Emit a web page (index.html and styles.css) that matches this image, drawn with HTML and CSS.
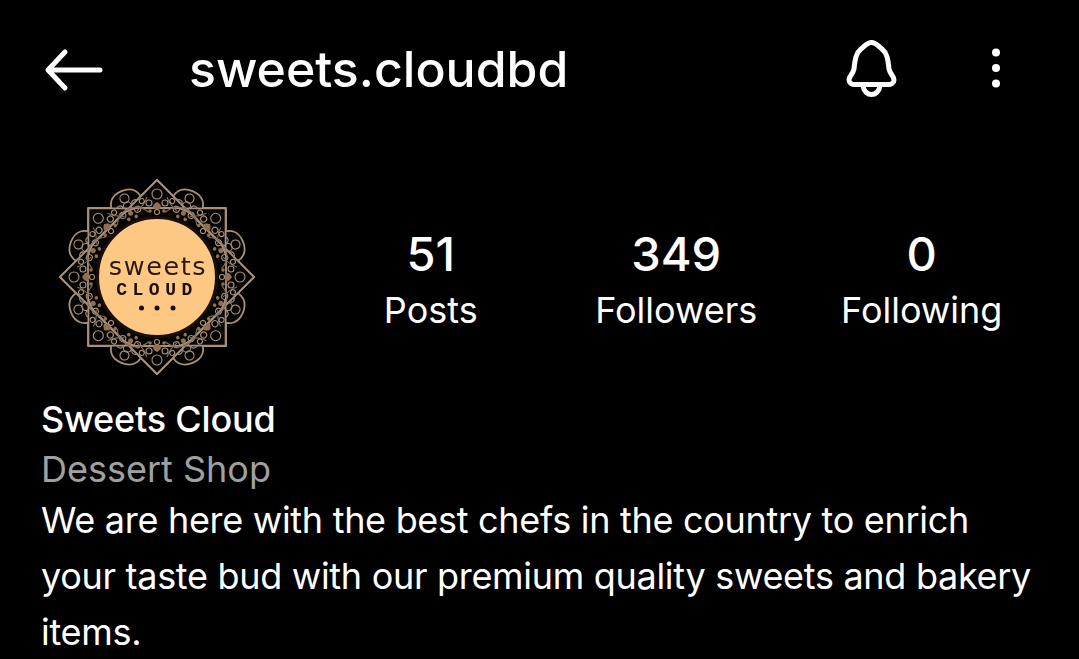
FILE: index.html
```html
<!DOCTYPE html>
<html lang="en">
<head>
<meta charset="utf-8">
<title>sweets.cloudbd</title>
<link rel="stylesheet" href="styles.css">
</head>
<body>
<main class="screen">
  <header class="topbar">
    <svg class="back" viewBox="0 0 60 44" aria-hidden="true"><path d="M21 4 4 22l17 18M5 22h51"/></svg>
    <h1 class="handle">sweets.cloudbd</h1>
    <svg class="bell" viewBox="0 0 54 60" aria-hidden="true"><path d="M26.500 4.500C31 4.500 33 8 37 11c5 4 6 10 7 20 1 5 5 7 5 11 0 3-3 4.500-6 4.500H10c-3 0-6-1.500-6-4.500 0-4 4-6 5-11 1-10 2-16 7-20 4-3 6-6.500 10.500-6.500Z"/><path d="M18 48c1 6 5 8.500 8.500 8.500S34 54 35 48"/></svg>
    <svg class="more" viewBox="0 0 10 40" aria-hidden="true"><circle cx="5" cy="4.500" r="4"/><circle cx="5" cy="20" r="4"/><circle cx="5" cy="35.500" r="4"/></svg>
  </header>
  <section class="profile">
    <svg class="logo" viewBox="-100 -100 200 200" role="img" aria-label="Sweets Cloud logo">
      <defs>
        <g id="petal">
          <path class="frame" d="M0-97 28-69H-28Z"/>
          <circle class="lace" cx="0" cy="-83" r="5"/>
          <circle class="lace" cx="-8" cy="-74" r="3"/>
          <circle class="lace" cx="8" cy="-74" r="3"/>
          <path class="wire" d="M-20-66c5-4 8-8 10-14M20-66c-5-4-8-8-10-14"/>
          <path class="gold" d="M0-75c5 3 6 6 0 8-6-2-5-5 0-8Z"/>
          <circle class="lace" cx="0" cy="-65" r="2.500"/>
          <circle class="gold" cx="-7" cy="-66" r="1.800"/>
          <circle class="gold" cx="7" cy="-66" r="1.800"/>
        </g>
        <g id="lobe">
          <path class="frame" d="M-15-72c-4-15 5-21 15-21s19 6 15 21Z"/>
          <circle class="lace" cx="0" cy="-85" r="4.500"/>
          <circle class="lace" cx="-8" cy="-77" r="3"/>
          <circle class="lace" cx="8" cy="-77" r="3"/>
        </g>
        <g id="fill">
          <circle class="lace" cx="0" cy="-77" r="4"/>
          <circle class="lace" cx="-8" cy="-70" r="3"/>
          <circle class="lace" cx="8" cy="-70" r="3"/>
          <circle class="lace" cx="-15" cy="-76" r="2.500"/>
          <circle class="lace" cx="15" cy="-76" r="2.500"/>
          <circle class="gold" cx="0" cy="-69" r="2.500"/>
          <circle class="gold" cx="-4" cy="-64" r="1.800"/>
          <circle class="gold" cx="4" cy="-64" r="1.800"/>
          <path class="wire" d="M-17-63c4-8 11-11 17-11s13 3 17 11"/>
        </g>
      </defs>
      <path class="frame" d="M-69-69H69V69H-69Z"/>
      <path class="frame" d="M0-97 97 0 0 97-97 0Z"/>
      <use href="#lobe" class="r22"/>
      <use href="#lobe" class="r67"/>
      <use href="#lobe" class="r112"/>
      <use href="#lobe" class="r157"/>
      <use href="#lobe" class="r202"/>
      <use href="#lobe" class="r247"/>
      <use href="#lobe" class="r292"/>
      <use href="#lobe" class="r337"/>
      <use href="#petal"/>
      <use href="#petal" class="r45"/>
      <use href="#petal" class="r90"/>
      <use href="#petal" class="r135"/>
      <use href="#petal" class="r180"/>
      <use href="#petal" class="r225"/>
      <use href="#petal" class="r270"/>
      <use href="#petal" class="r315"/>
      <use href="#fill" class="r22"/>
      <use href="#fill" class="r67"/>
      <use href="#fill" class="r112"/>
      <use href="#fill" class="r157"/>
      <use href="#fill" class="r202"/>
      <use href="#fill" class="r247"/>
      <use href="#fill" class="r292"/>
      <use href="#fill" class="r337"/>
      <circle class="disc" r="59.500"/>
      <text class="logo-sweets" x="1" y="-2" text-anchor="middle">sweets</text>
      <text class="logo-cloud" y="17.500" text-anchor="middle">CLOUD</text>
      <circle class="dot" cx="-15.500" cy="31" r="2.500"/>
      <circle class="dot" cy="31" r="2.500"/>
      <circle class="dot" cx="16" cy="31" r="2.500"/>
    </svg>
    <ul class="stats">
      <li class="stat"><strong>51</strong><span>Posts</span></li>
      <li class="stat"><strong>349</strong><span>Followers</span></li>
      <li class="stat"><strong>0</strong><span>Following</span></li>
    </ul>
  </section>
  <section class="bio">
    <h2 class="name">Sweets Cloud</h2>
    <p class="category">Dessert Shop</p>
    <p class="text">We are here with the best chefs in the country to enrich your taste bud with our premium quality sweets and bakery items.</p>
  </section>
</main>
</body>
</html>
```

FILE: styles.css
```css
* { box-sizing: border-box; margin: 0; padding: 0; }
html, body { height: 100%; background: #000; overflow: hidden; }
body { color: #fff; font-family: Inter, "Liberation Sans", sans-serif; }
.screen { height: 659px; padding: 0 42px; overflow: hidden; }

.topbar { display: flex; align-items: center; height: 70px; margin-top: 33px; }
.back { width: 60px; height: 44px; margin-left: 2px; margin-top: 4px; fill: none; stroke: #fff; stroke-width: 5; stroke-linecap: round; stroke-linejoin: round; }
.handle { flex: 1; margin-left: 85px; padding-top: 2px; font-size: 50px; font-weight: 500; line-height: 68px; }
.bell { width: 54px; height: 60px; fill: none; stroke: #fff; stroke-width: 5; stroke-linejoin: round; stroke-linecap: round; }
.more { width: 10px; height: 40px; margin-left: 92px; margin-right: 36px; fill: #fff; }

.profile { display: flex; align-items: center; margin-top: 75px; height: 198px; }
.logo { flex: none; width: 200px; height: 200px; margin-left: 15px; filter: blur(0.4px); }
.frame { fill: #050403; stroke: #a8917c; stroke-width: 1.800; stroke-linejoin: round; }
.lace { fill: none; stroke: #a8917c; stroke-width: 1.100; }
.wire { fill: none; stroke: #7f6c5a; stroke-width: 1.100; }
.gold { fill: #8f7152; }
.r22 { transform: rotate(22.5deg); }
.r45 { transform: rotate(45deg); }
.r67 { transform: rotate(67.5deg); }
.r90 { transform: rotate(90deg); }
.r112 { transform: rotate(112.5deg); }
.r135 { transform: rotate(135deg); }
.r157 { transform: rotate(157.5deg); }
.r180 { transform: rotate(180deg); }
.r202 { transform: rotate(202.5deg); }
.r225 { transform: rotate(225deg); }
.r247 { transform: rotate(247.5deg); }
.r270 { transform: rotate(270deg); }
.r292 { transform: rotate(292.5deg); }
.r315 { transform: rotate(315deg); }
.r337 { transform: rotate(337.5deg); }
.disc { fill: #fdc784; stroke: #1a0f08; stroke-width: 3; }
.logo-sweets { fill: #2a1a10; font-family: "DejaVu Sans", sans-serif; font-size: 25.500px; letter-spacing: 1.600px; }
.logo-cloud { fill: #1a0f08; font-family: "Liberation Mono", monospace; font-size: 18px; font-weight: 700; letter-spacing: 5.500px; }
.dot { fill: #1a0f08; }

.stats { display: grid; grid-template-columns: repeat(3, 245.500px); list-style: none; margin-left: 51px; }
.stat { display: flex; flex-direction: column; align-items: center; padding-top: 9px; }
.stat strong { font-size: 47px; font-weight: 500; line-height: 56px; }
.stat span { font-size: 36px; line-height: 56px; }

.bio { margin-top: 18px; margin-left: -1px; }
.name { font-size: 36px; font-weight: 500; line-height: 50px; letter-spacing: -0.200px; }
.category { font-size: 36px; line-height: 50px; color: #a0a0a0; }
.text { margin-top: -2px; font-size: 36px; line-height: 56px; letter-spacing: -0.300px; }
```
